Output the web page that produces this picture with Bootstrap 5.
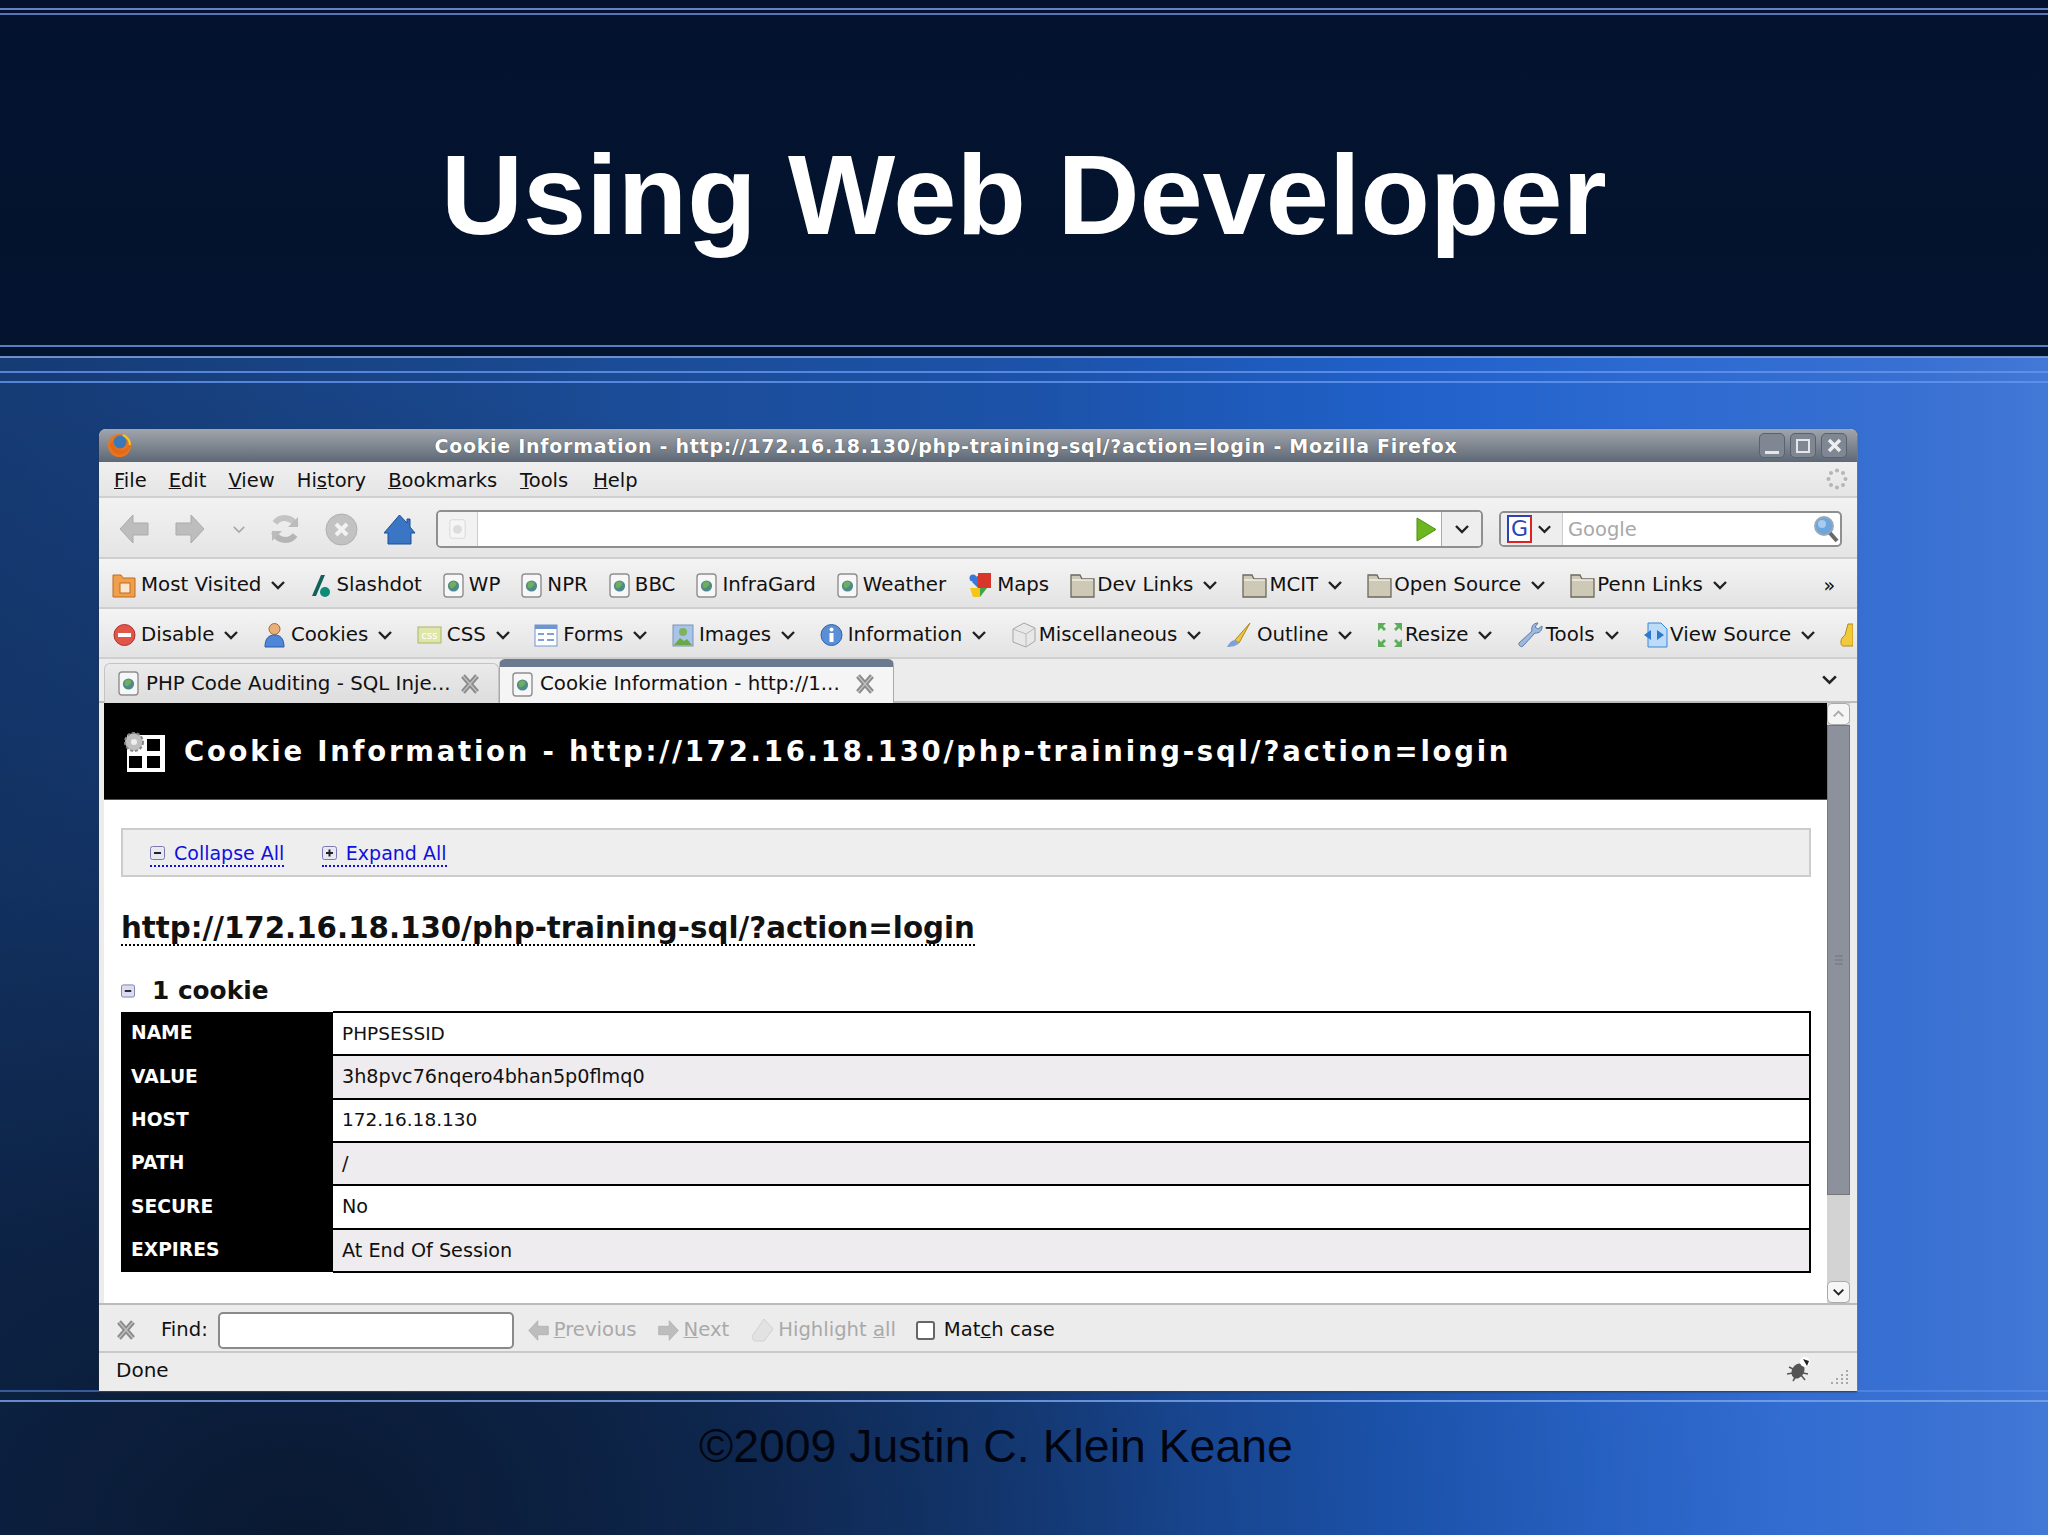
<!DOCTYPE html>
<html lang="en"><head><meta charset="utf-8"><title>Using Web Developer</title>
<link href="https://cdn.jsdelivr.net/npm/bootstrap@5.3.0/dist/css/bootstrap.min.css" rel="stylesheet">
<style>
html,body{margin:0;height:1535px;overflow:hidden}
body{width:2048px;font-family:"DejaVu Sans",sans-serif;font-size:20px;color:#111;line-height:1.2;
background:
linear-gradient(180deg,transparent 8px,rgba(120,160,235,.8) 8px,rgba(120,160,235,.8) 10px,transparent 10px,transparent 13px,rgba(120,160,235,.7) 13px,rgba(120,160,235,.7) 15px,transparent 15px,transparent 345px,rgba(120,160,235,.75) 345px,rgba(120,160,235,.75) 347px,transparent 347px,transparent 356px,rgba(125,160,225,.85) 356px,rgba(125,160,225,.85) 358px,transparent 358px,transparent 371px,rgba(100,150,240,.8) 371px,rgba(100,150,240,.8) 373px,transparent 373px,transparent 381px,rgba(100,150,240,.8) 381px,rgba(100,150,240,.8) 383px,transparent 383px,transparent 1390px,rgba(100,150,240,.5) 1390px,rgba(100,150,240,.5) 1392px,transparent 1392px,transparent 1400px,rgba(125,165,235,.8) 1400px,rgba(125,165,235,.8) 1402px,transparent 1402px),
linear-gradient(180deg,#04122e 0,#03142f 357px,transparent 357px),
radial-gradient(ellipse 1500px 1150px at 300px 1535px,rgba(9,24,48,.98) 0,rgba(9,24,48,.72) 30%,rgba(9,24,48,.3) 60%,transparent 100%),
linear-gradient(90deg,rgba(8,30,60,.25),transparent 30%),
linear-gradient(90deg,#1a4588 0,#1a4a92 25%,#1c52a8 50%,#2060c8 68%,#2a68d0 78%,#3870d2 93%,#4278d6 100%)}
.slide-head{height:357px;color:#fff;font:700 113.6px "Liberation Sans",Arial,sans-serif;line-height:1;padding:138px 0 0 441px;margin:0}
.ffwin{margin:72px 0 0 99px;width:1758px;height:962px;background:#edecec;border-radius:7px 7px 0 0;box-shadow:0 1px 2px #333,1px 0 0 #8a929c;overflow:hidden}
.titlebar{height:33px;background:linear-gradient(180deg,#a1a5ac,#878d96 40%,#5d6876);color:#fff;font-weight:700;font-size:19px;letter-spacing:.72px;position:relative;text-shadow:0 0 1px #333;padding-top:1px}
.titlebar .fxlogo{position:absolute;left:8px;top:3px}
.titlebar .wintitle{margin-right:64px}
.wbtns{position:absolute;right:10px;top:4px;gap:5px}
.wbtn{width:26px;height:25px;border:1.5px solid #59626e;border-radius:5px;background:#7f8792}
.menubar{height:36px;padding:3px 0 0 15px;gap:22px;font-size:19.5px;background:linear-gradient(180deg,#f0efef,#e6e5e5);border-bottom:2px solid #d0d0d0;position:relative}
.menubar .helpitem{margin-left:3px}
.menubar .toolsitem{margin-left:1px}
.spinner{position:absolute;right:9px;top:6px}
.navbarx{height:61px;padding:3px 0 0 20px;background:linear-gradient(180deg,#f3f2f2,#e6e5e5);border-bottom:2px solid #cfcfcf}
.urlbar{margin-left:20px;width:1047px;height:38px;background:#fff;border:2px solid #8f8f8f;border-radius:5px;overflow:hidden}
.urlfav{width:40px;height:100%;background:#f2f2f2;border-right:1px solid #ccc}
.urldrop{width:40px;height:100%;background:#eee;border-left:1px solid #aaa}
.searchbar{margin-left:16px;width:343px;height:36px;background:#fff;border:2px solid #8f8f8f;border-radius:5px;color:#a8a8a8;overflow:hidden;font-size:19.5px}
.searchtxt{padding:2px 0 0 5px}
.engine{width:62px;height:100%;background:#eee;border-right:1px solid #ccc;padding-left:6px;gap:5px}
.glogo{width:25px;height:28px;flex:none;background:#fff;border:2px solid #2e9b3c;border-right-color:#d22;border-bottom-color:#d22;border-top-color:#2a44b8;border-left-color:#2a44b8;color:#2a44b8;font-size:22px;line-height:24px;text-align:center}
.tbrow{height:50px;background:linear-gradient(180deg,#f5f4f4,#e4e3e3);border-bottom:2px solid #cfcfcf;padding:4px 0 0 13px;white-space:nowrap;overflow:hidden;font-size:19.8px}
.tbitem{gap:5px;margin-right:21px}
.tbrow.devrow{padding-left:14px}
.devrow .tbitem{margin-right:20.5px}
.tbitem>svg{flex:none}
.tbitem .drop{margin:0 3px 0 4px}
.tbitem .tight{margin-left:-3px}
.tabrow{height:44px;background:#edecec;padding-left:5px;border-bottom:2px solid #bbb;position:relative;font-size:19.8px}
.tabx{width:395px;height:40px;margin-top:4px;background:linear-gradient(180deg,#ebeaea,#dedddd);border:1px solid #c4c4c4;border-bottom:0;border-radius:6px 6px 0 0;padding:0 18px 0 13px;gap:7px}
.tabx.on{height:44px;margin-top:0;background:#f6f5f5;border-top:8px solid #6b7a8e;border-left:1px solid #aaa;border-right:1px solid #aaa;padding:0 18px 2px 12px}
.tabtxt{flex:1;white-space:nowrap;overflow:hidden}
.tabmore{position:absolute;right:19px;top:15px}
.pagewrap{height:602px;padding:0 5px 0 5px;border-bottom:2px solid #bbb}
.content{width:1723px;background:#fff;height:100%}
.cihead{height:97px;background:#000;color:#fff;font-weight:700;font-size:27.5px;letter-spacing:2.76px;padding-left:18px;gap:19px;border-bottom:1px solid #555}
.cibar{margin:28px 16px 0 17px;height:49px;background:#eeeeee;border:2px solid #ccc;padding:5px 0 0 27px;font-size:19px;gap:37.5px}
.cibar a{color:#1111dd;text-decoration:none;border-bottom:2px dotted #1111dd;gap:9px;line-height:1.1;padding-bottom:1px}
.ciurl{margin:36px 0 0 17px;font-weight:700;font-size:29.3px;line-height:30px;border-bottom:2px dotted #000;width:854px;white-space:nowrap;height:33px}
.cicount{margin:30px 0 0 17px;font-weight:700;font-size:24.8px;gap:17px;line-height:30px;height:30px}
.citable{margin:5px 0 0 17px;width:1690px;border-collapse:collapse;table-layout:fixed}
.citable th{width:212px;height:43.33px;background:#000;color:#fff;padding:0 0 0 10px;border:0;font-weight:700;font-size:18.7px}
.citable td{padding:0 0 0 9px;border:2px solid #000;border-left:0;vertical-align:middle;font-size:19.2px}
.citable td.narrowcell{font-size:18.5px}
.citable tr:nth-child(even) td{background:#eeecee}
.sbar{width:25px;height:100%;background:#d3d3d3;padding-right:2px;background-clip:content-box;position:relative}
.sbtn{height:22px;background:#f5f5f5;border:1.5px solid #aaa;border-radius:5px}
.sthumb{height:470px;background:#8c919b;border:1px solid #777}
.findbar{height:48px;background:#edecec;border-bottom:2px solid #c8c8c8;padding:4px 0 0 16px;white-space:nowrap;font-size:19.6px}
.findin{width:296px;height:37px;background:#fff;border:2px solid #8a8a8a;border-radius:5px;margin:0 14px 0 10px}
.gray{color:#a9a9a9}
.chk{width:19px;height:19px;background:#fff;border:2px solid #666;border-radius:3px;margin:0 9px 0 0}
.statusrow{height:38px;padding:0 0 5px 17px;position:relative}
.bug{position:absolute;right:44px;top:3px}
.grip{position:absolute;right:8px;top:16px}
.slide-foot{margin:32px 0 0;padding-left:699px;font:46.4px "Liberation Sans",Arial,sans-serif;color:#02050f;line-height:1;white-space:nowrap}
</style></head><body>
<svg width="0" height="0" class="position-absolute">
<defs>
<symbol id="pg" viewBox="0 0 21 25"><rect x="1" y="1" width="19" height="23" rx="3" fill="#f7f7f7" stroke="#8e8e8e" stroke-width="1.4"/><circle cx="10.5" cy="13" r="5.6" fill="#4f8a8a"/><path d="M7 10c2-2 5-2 6 0s-1 3-2 4-3 2-4 0 0-3 0-4z" fill="#6fae5a"/></symbol>
<symbol id="folder" viewBox="0 0 25 26"><path d="M1 3h9l2 4h12v18H1z" fill="#cdc9b6" stroke="#6c6a5c" stroke-width="1.3"/><path d="M2 8h21" stroke="#f1efe4" stroke-width="1.5"/></symbol>
<symbol id="chev" viewBox="0 0 16 10"><path d="M2 2l6 6 6-6" fill="none" stroke="#222" stroke-width="2.4"/></symbol>
<symbol id="xx" viewBox="0 0 20 22"><path d="M3 3l14 16M17 3L3 19" stroke="#8a8a8a" stroke-width="5"/><path d="M3 3l14 16M17 3L3 19" stroke="#c0c0c0" stroke-width="1.4"/></symbol>
<symbol id="arr" viewBox="0 0 30 30"><path d="M29 9v12H14v8L1 15 14 1v8z" fill="#bdbdbd" stroke="#ababab"/></symbol>
</defs>
</svg>

<h1 class="slide-head">Using Web Developer</h1>

<div class="ffwin">
 <div class="titlebar d-flex align-items-center justify-content-center">
  <svg class="fxlogo" width="25" height="27" viewBox="0 0 25 27"><circle cx="12.5" cy="13.5" r="11.5" fill="#e8761e"/><circle cx="13" cy="10" r="6.5" fill="#3a78b8"/><path d="M3 12c1 8 7 12 13 10s7-7 7-11c-1 5-5 8-10 7S6 14 7 8z" fill="#e4671a"/><path d="M16 3c4 2 7 6 7 10" stroke="#f5c52c" stroke-width="2" fill="none"/></svg>
  <span class="wintitle">Cookie Information - http://172.16.18.130/php-training-sql/?action=login - Mozilla Firefox</span>
  <div class="wbtns position-absolute d-flex">
   <div class="wbtn d-flex align-items-end justify-content-center"><svg width="14" height="7" viewBox="0 0 14 7"><rect y="1" width="14" height="3" fill="#e6e6e6"/></svg></div>
   <div class="wbtn d-flex align-items-center justify-content-center"><svg width="14" height="14" viewBox="0 0 14 14"><rect x="1" y="1" width="12" height="12" fill="none" stroke="#e6e6e6" stroke-width="2"/></svg></div>
   <div class="wbtn d-flex align-items-center justify-content-center"><svg width="15" height="15" viewBox="0 0 15 15"><path d="M2 2l11 11M13 2L2 13" stroke="#eee" stroke-width="3.4"/></svg></div>
  </div>
 </div>

 <div class="menubar d-flex align-items-center">
  <span><u>F</u>ile</span><span><u>E</u>dit</span><span><u>V</u>iew</span><span>Hi<u>s</u>tory</span><span><u>B</u>ookmarks</span><span class="toolsitem"><u>T</u>ools</span><span class="helpitem"><u>H</u>elp</span>
  <svg class="spinner" width="22" height="22" viewBox="0 0 22 22" fill="#b5b5b5"><circle cx="11" cy="2.5" r="2"/><circle cx="17" cy="5" r="2"/><circle cx="19.5" cy="11" r="2"/><circle cx="17" cy="17" r="2"/><circle cx="11" cy="19.5" r="2"/><circle cx="5" cy="17" r="2"/><circle cx="2.5" cy="11" r="2"/><circle cx="5" cy="5" r="2"/></svg>
 </div>

 <div class="navbarx d-flex align-items-center">
  <svg width="30" height="30"><use href="#arr"/></svg>
  <svg width="30" height="30" style="margin-left:26px;transform:scaleX(-1)"><use href="#arr"/></svg>
  <svg width="14" height="9" style="margin-left:27px" viewBox="0 0 16 10"><path d="M2 2l6 6 6-6" fill="none" stroke="#aaa" stroke-width="2"/></svg>
  <svg width="30" height="30" viewBox="0 0 30 30" style="margin-left:24px"><path d="M26 12A12 12 0 0 0 5 9" fill="none" stroke="#c4c4c4" stroke-width="6"/><path d="M4 18a12 12 0 0 0 21 3" fill="none" stroke="#b5b5b5" stroke-width="6"/><path d="M28 3v10H18zM2 27V17h10z" fill="#bbb"/></svg>
  <svg width="33" height="33" viewBox="0 0 33 33" style="margin-left:25px"><circle cx="16.5" cy="16.5" r="15.5" fill="#c2c2c2" stroke="#b0b0b0"/><path d="M11 11l11 11M22 11L11 22" stroke="#f2f2f2" stroke-width="4"/></svg>
  <svg width="33" height="31" viewBox="0 0 33 31" style="margin-left:25px"><path d="M16.500 1L24 9V5h3v8l5 6h-4v11H5V19H1z" fill="#3b76c4" stroke="#1d4f96"/></svg>
  <div class="urlbar d-flex align-items-center">
   <div class="urlfav d-flex align-items-center justify-content-center"><svg width="17" height="22" viewBox="0 0 21 25"><rect x="1" y="1" width="19" height="23" rx="3" fill="#f5f5f5" stroke="#d5d5d5"/><circle cx="10.500" cy="13" r="5.500" fill="#dcdcdc"/></svg></div>
   <div class="flex-grow-1"></div>
   <svg width="21" height="25" viewBox="0 0 21 25" class="me-1"><path d="M1 1l19 11.500L1 24z" fill="#6cb61e" stroke="#4d8f10"/></svg>
   <div class="urldrop d-flex align-items-center justify-content-center"><svg width="16" height="10"><use href="#chev"/></svg></div>
  </div>
  <div class="searchbar d-flex align-items-center">
   <div class="engine d-flex align-items-center"><span class="glogo">G</span><svg width="15" height="10" class="flex-none"><use href="#chev"/></svg></div>
   <span class="flex-grow-1 searchtxt">Google</span>
   <svg width="26" height="28" viewBox="0 0 26 28" style="margin-right:1px"><circle cx="11" cy="11" r="9" fill="#6ea6dc" stroke="#9aaabb" stroke-width="2"/><circle cx="9" cy="9" r="4" fill="#a5cbee"/><path d="M17 18l7 8" stroke="#6a6a6a" stroke-width="4"/></svg>
  </div>
 </div>

 <div class="tbrow d-flex align-items-center">
  <div class="tbitem d-flex align-items-center"><svg width="24" height="26" viewBox="0 0 24 26"><path d="M1 3h8l2 3h12v19H1z" fill="#f0a04c" stroke="#c06a1a"/><rect x="8" y="11" width="10" height="10" fill="#fbe7cf" stroke="#c06a1a"/></svg><span>Most Visited</span><svg width="16" height="10" class="drop"><use href="#chev"/></svg></div>
  <div class="tbitem d-flex align-items-center"><svg width="21" height="25" viewBox="0 0 21 25"><path d="M11 2L2 23h4l9-21z" fill="#13605a"/><circle cx="15" cy="19" r="5" fill="#0d8a78"/></svg><span>Slashdot</span></div>
  <div class="tbitem d-flex align-items-center"><svg width="21" height="25"><use href="#pg"/></svg><span>WP</span></div>
  <div class="tbitem d-flex align-items-center"><svg width="21" height="25"><use href="#pg"/></svg><span>NPR</span></div>
  <div class="tbitem d-flex align-items-center"><svg width="21" height="25"><use href="#pg"/></svg><span>BBC</span></div>
  <div class="tbitem d-flex align-items-center"><svg width="21" height="25"><use href="#pg"/></svg><span>InfraGard</span></div>
  <div class="tbitem d-flex align-items-center"><svg width="21" height="25"><use href="#pg"/></svg><span>Weather</span></div>
  <div class="tbitem d-flex align-items-center"><svg width="25" height="26" viewBox="0 0 25 26"><rect x="11" y="1" width="13" height="15" fill="#d8362a"/><path d="M11 4h-1l-5 6 6 6z" fill="#3a78d8"/><circle cx="6" cy="6" r="3.500" fill="#3a78d8"/><path d="M3 16h10v9H6z" fill="#f5c518"/><path d="M13 16h7l-7 9z" fill="#3fa648"/></svg><span>Maps</span></div>
  <div class="tbitem d-flex align-items-center"><svg width="25" height="26"><use href="#folder"/></svg><span class="tight">Dev Links</span><svg width="16" height="10" class="drop"><use href="#chev"/></svg></div>
  <div class="tbitem d-flex align-items-center"><svg width="25" height="26"><use href="#folder"/></svg><span class="tight">MCIT</span><svg width="16" height="10" class="drop"><use href="#chev"/></svg></div>
  <div class="tbitem d-flex align-items-center"><svg width="25" height="26"><use href="#folder"/></svg><span class="tight">Open Source</span><svg width="16" height="10" class="drop"><use href="#chev"/></svg></div>
  <div class="tbitem d-flex align-items-center"><svg width="25" height="26"><use href="#folder"/></svg><span class="tight">Penn Links</span><svg width="16" height="10" class="drop"><use href="#chev"/></svg></div>
  <span class="ms-auto" style="margin-right:22px;font-size:19px">»</span>
 </div>

 <div class="tbrow devrow d-flex align-items-center">
  <div class="tbitem d-flex align-items-center"><svg width="23" height="24" viewBox="0 0 23 24"><circle cx="11.500" cy="12" r="10.500" fill="#e2564a" stroke="#a8302a"/><rect x="5" y="10" width="13" height="4" fill="#fff"/></svg><span>Disable</span><svg width="16" height="10" class="drop"><use href="#chev"/></svg></div>
  <div class="tbitem d-flex align-items-center"><svg width="23" height="26" viewBox="0 0 23 26"><circle cx="11.500" cy="7" r="5.500" fill="#e8b078" stroke="#a86a30"/><path d="M2 25c0-9 4-12 9.500-12S21 16 21 25z" fill="#4f86d8" stroke="#2a5aa8"/></svg><span>Cookies</span><svg width="16" height="10" class="drop"><use href="#chev"/></svg></div>
  <div class="tbitem d-flex align-items-center"><svg width="25" height="18" viewBox="0 0 25 18"><rect x="1" y="1" width="23" height="16" fill="#dfe6a8" stroke="#a9b56a"/><text x="12.500" y="13" font-size="10" text-anchor="middle" fill="#fff" font-family="DejaVu Sans">css</text></svg><span>CSS</span><svg width="16" height="10" class="drop"><use href="#chev"/></svg></div>
  <div class="tbitem d-flex align-items-center"><svg width="24" height="23" viewBox="0 0 24 23"><rect x="1" y="1" width="22" height="21" fill="#fff" stroke="#6f96cf"/><rect x="1" y="1" width="22" height="4" fill="#6f96cf"/><path d="M4 10h6M4 16h6M13 10h7M13 16h7" stroke="#7fa2d6" stroke-width="2"/></svg><span>Forms</span><svg width="16" height="10" class="drop"><use href="#chev"/></svg></div>
  <div class="tbitem d-flex align-items-center"><svg width="22" height="23" viewBox="0 0 22 23"><rect x="1" y="1" width="20" height="21" fill="#a8c4e8" stroke="#7d93b3"/><path d="M2 21l6-7 4 3 3-2 5 6z" fill="#6aa84a"/><circle cx="11" cy="8" r="4" fill="#7fb35a"/></svg><span>Images</span><svg width="16" height="10" class="drop"><use href="#chev"/></svg></div>
  <div class="tbitem d-flex align-items-center"><svg width="23" height="24" viewBox="0 0 23 24"><circle cx="11.500" cy="12" r="10.500" fill="#5a8fd8" stroke="#2f62ad"/><rect x="9.500" y="10" width="4" height="9" fill="#fff"/><circle cx="11.500" cy="6.500" r="2" fill="#fff"/></svg><span>Information</span><svg width="16" height="10" class="drop"><use href="#chev"/></svg></div>
  <div class="tbitem d-flex align-items-center"><svg width="26" height="26" viewBox="0 0 26 26"><path d="M13 1l11 5v13l-9 6-13-5V7z" fill="#e8e8e8" stroke="#a5a5a5"/><path d="M2 7l13 5 9-6M15 12v13" fill="none" stroke="#b8b8b8"/></svg><span class="tight">Miscellaneous</span><svg width="16" height="10" class="drop"><use href="#chev"/></svg></div>
  <div class="tbitem d-flex align-items-center"><svg width="26" height="26" viewBox="0 0 26 26"><path d="M24 1L9 18l4 3z" fill="#efc53c" stroke="#a88a20"/><path d="M9 18c-3 0-6 3-8 7 4 0 10-1 12-4z" fill="#7fa2d6"/></svg><span>Outline</span><svg width="16" height="10" class="drop"><use href="#chev"/></svg></div>
  <div class="tbitem d-flex align-items-center"><svg width="26" height="26" viewBox="0 0 26 26" fill="#5dae5a"><path d="M1 1h8L6 4l3 3-2 2-3-3-3 3zM25 1h-8l3 3-3 3 2 2 3-3 3 3zM1 25h8l-3-3 3-3-2-2-3 3-3-3zM25 25h-8l3-3-3-3 2-2 3 3 3-3z"/></svg><span class="tight">Resize</span><svg width="16" height="10" class="drop"><use href="#chev"/></svg></div>
  <div class="tbitem d-flex align-items-center"><svg width="27" height="26" viewBox="0 0 27 26"><path d="M20 1a6 6 0 0 0-5 8L2 21c-1 2 2 5 4 3l12-13a6 6 0 0 0 7-7l-4 3-3-2 3-4z" fill="#9db8de" stroke="#5e7ba8"/></svg><span class="tight">Tools</span><svg width="16" height="10" class="drop"><use href="#chev"/></svg></div>
  <div class="tbitem d-flex align-items-center"><svg width="25" height="26" viewBox="0 0 25 26"><path d="M5 1h13l6 6v18H5z" fill="#bcdcf8" stroke="#3a86d8"/><path d="M1 13l7-5v10zM14 8l7 5-7 5z" fill="#2f78d0"/></svg><span class="tight">View Source</span><svg width="16" height="10" class="drop"><use href="#chev"/></svg></div>
  <svg width="13" height="25" viewBox="0 0 13 25" class="flex-none"><path d="M8 1l5 0v22H3c-2 0-3-4-1-8l3-3z" fill="#f2c93a" stroke="#b48c14"/></svg>
 </div>

 <div class="tabrow d-flex">
  <div class="tabx d-flex align-items-center"><svg width="21" height="25" class="flex-none"><use href="#pg"/></svg><span class="tabtxt">PHP Code Auditing - SQL Inje...</span><svg width="20" height="22" class="flex-none"><use href="#xx"/></svg></div>
  <div class="tabx on d-flex align-items-center"><svg width="21" height="25" class="flex-none"><use href="#pg"/></svg><span class="tabtxt">Cookie Information - http://1...</span><svg width="20" height="22" class="flex-none"><use href="#xx"/></svg></div>
  <svg class="tabmore" width="17" height="11"><use href="#chev"/></svg>
 </div>

 <div class="pagewrap d-flex">
  <div class="content">
   <div class="cihead d-flex align-items-center">
    <svg width="43" height="42" viewBox="0 0 43 42" class="flex-none"><rect x="5" y="5" width="38" height="37" fill="#fff"/><rect x="25" y="9" width="13" height="12" fill="#000"/><rect x="7" y="26" width="13" height="12" fill="#000"/><rect x="25" y="26" width="13" height="12" fill="#000"/><circle cx="12" cy="12" r="9" fill="#bfbfbf" stroke="#888" stroke-width="2" stroke-dasharray="3 2"/><circle cx="12" cy="12" r="3" fill="#eee"/></svg>
    <span>Cookie Information - http://172.16.18.130/php-training-sql/?action=login</span>
   </div>
   <div class="cibar d-flex align-items-center">
    <a href="#" class="d-flex align-items-center"><svg width="15" height="14" viewBox="0 0 15 14"><rect x=".5" y=".5" width="14" height="13" rx="2" fill="#e8e8f4" stroke="#7a7ab0"/><path d="M4 7h7" stroke="#222" stroke-width="2"/></svg>Collapse All</a>
    <a href="#" class="d-flex align-items-center"><svg width="15" height="14" viewBox="0 0 15 14"><rect x=".5" y=".5" width="14" height="13" rx="2" fill="#e8e8f4" stroke="#7a7ab0"/><path d="M4 7h7M7.500 3.500v7" stroke="#222" stroke-width="2"/></svg>Expand All</a>
   </div>
   <div class="ciurl">http://172.16.18.130/php-training-sql/?action=login</div>
   <div class="cicount d-flex align-items-center"><svg width="14" height="14" viewBox="0 0 15 14"><rect x=".5" y=".5" width="14" height="13" rx="2" fill="#dcdcf0" stroke="#7a7ab0"/><path d="M4 7h7" stroke="#222" stroke-width="2"/></svg><span>1 cookie</span></div>
   <table class="citable">
    <tr><th>NAME</th><td class="narrowcell">PHPSESSID</td></tr>
    <tr><th>VALUE</th><td>3h8pvc76nqero4bhan5p0flmq0</td></tr>
    <tr><th>HOST</th><td class="narrowcell">172.16.18.130</td></tr>
    <tr><th>PATH</th><td>/</td></tr>
    <tr><th>SECURE</th><td>No</td></tr>
    <tr><th>EXPIRES</th><td>At End Of Session</td></tr>
   </table>
  </div>
  <div class="sbar d-flex flex-column">
   <div class="sbtn d-flex align-items-center justify-content-center"><svg width="13" height="8" viewBox="0 0 16 10"><path d="M2 8l6-6 6 6" fill="none" stroke="#aaa" stroke-width="2.400"/></svg></div>
   <div class="sthumb d-flex align-items-center justify-content-center"><svg width="10" height="10" viewBox="0 0 10 10"><path d="M1 1h8M1 5h8M1 9h8" stroke="#6f747e"/></svg></div>
   <div class="flex-grow-1"></div>
   <div class="sbtn d-flex align-items-center justify-content-center"><svg width="13" height="8"><use href="#chev"/></svg></div>
  </div>
 </div>

 <div class="findbar d-flex align-items-center">
  <svg width="22" height="22"><use href="#xx"/></svg>
  <span style="margin-left:24px">Find:</span>
  <div class="findin"></div>
  <svg width="21" height="23" viewBox="0 0 30 30"><use href="#arr"/></svg>
  <span class="gray" style="margin:0 21px 0 5px"><u>P</u>revious</span>
  <svg width="21" height="23" viewBox="0 0 30 30" style="transform:scaleX(-1)"><use href="#arr"/></svg>
  <span class="gray" style="margin:0 22px 0 5px"><u>N</u>ext</span>
  <svg width="23" height="24" viewBox="0 0 23 24"><path d="M13 1l9 10-9 12H4c-3-1-3-4-2-6z" fill="#e2e2e2" stroke="#d0d0d0"/></svg>
  <span class="gray" style="margin:0 20px 0 4px">Highlight <u>a</u>ll</span>
  <span class="chk"></span><span>Mat<u>c</u>h case</span>
 </div>

 <div class="statusrow d-flex align-items-center">Done
  <svg class="bug" width="27" height="27" viewBox="0 0 27 27"><ellipse cx="12" cy="15" rx="6" ry="8" fill="#555" transform="rotate(30 12 15)"/><path d="M3 11l6 3M1 18l6-1M7 25l3-5M22 18l-5-1M19 24l-4-5" stroke="#555" stroke-width="1.500"/><circle cx="19" cy="6" r="5" fill="#fff"/><path d="M17 3l6 2-2 5z" fill="#222"/></svg>
  <svg class="grip" width="18" height="16" viewBox="0 0 18 16" fill="#a8a8a8"><rect x="15" y="1" width="2" height="2"/><rect x="10" y="5" width="2" height="2"/><rect x="15" y="5" width="2" height="2"/><rect x="5" y="9" width="2" height="2"/><rect x="10" y="9" width="2" height="2"/><rect x="15" y="9" width="2" height="2"/><rect x="0" y="13" width="2" height="2"/><rect x="5" y="13" width="2" height="2"/><rect x="10" y="13" width="2" height="2"/><rect x="15" y="13" width="2" height="2"/></svg>
 </div>
</div>

<div class="slide-foot">©2009 Justin C. Klein Keane</div>
<script src="https://cdn.jsdelivr.net/npm/bootstrap@5.3.0/dist/js/bootstrap.bundle.min.js"></script>
</body></html>
